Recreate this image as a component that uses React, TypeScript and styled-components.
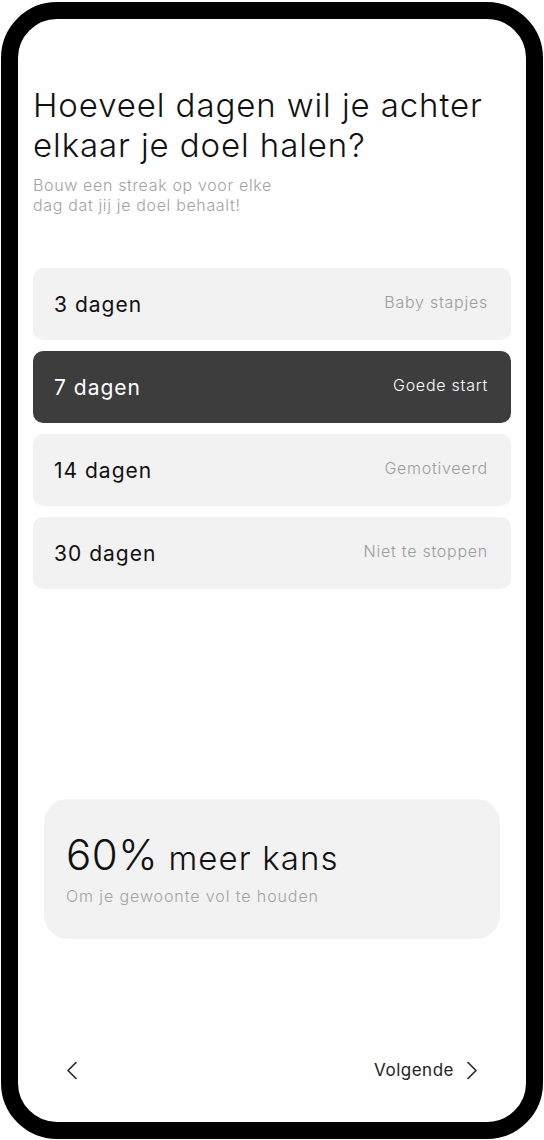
import React, {useState} from 'react'
import styled, {createGlobalStyle} from 'styled-components'

const GlobalStyle = createGlobalStyle`
  html, body {
    margin: 0;
    padding: 0;
    background: #ffffff;
  }
  body {
    font-family: Inter, "Noto Sans", sans-serif;
    -webkit-font-smoothing: antialiased;
  }
`

type Option = {
  days: number
  label: string
}

const options: Option[] = [
  {days: 3, label: 'Baby stapjes'},
  {days: 7, label: 'Goede start'},
  {days: 14, label: 'Gemotiveerd'},
  {days: 30, label: 'Niet te stoppen'},
]

const ChevronLeft: React.FC = () => (
  <svg width="12" height="19" viewBox="0 0 12 19" fill="none">
    <path d="M10 1.5L2 9.5L10 17.5" stroke="#222" strokeWidth="1.6" strokeLinecap="round" strokeLinejoin="round" />
  </svg>
)

const ChevronRight: React.FC = () => (
  <svg width="12" height="19" viewBox="0 0 12 19" fill="none">
    <path d="M2 1.5L10 9.5L2 17.5" stroke="#222" strokeWidth="1.6" strokeLinecap="round" strokeLinejoin="round" />
  </svg>
)

const App: React.FC = () => {
  const [selected, setSelected] = useState(7)

  return (
    <>
      <GlobalStyle />
      <StyledPhone>
        <StyledScreen>
          <StyledTitle>Hoeveel dagen wil je achter elkaar je doel halen?</StyledTitle>
          <StyledSubtitle>
            Bouw een streak op voor elke
            <br />
            dag dat jij je doel behaalt!
          </StyledSubtitle>

          <StyledOptionList>
            {options.map((option) => (
              <StyledOption
                key={option.days}
                $active={selected === option.days}
                onClick={() => setSelected(option.days)}
              >
                <StyledDays>{option.days} dagen</StyledDays>
                <StyledLabel>{option.label}</StyledLabel>
              </StyledOption>
            ))}
          </StyledOptionList>

          <StyledStatCard>
            <StyledStatHeading>
              <StyledPercent>60%</StyledPercent> meer kans
            </StyledStatHeading>
            <StyledStatText>Om je gewoonte vol te houden</StyledStatText>
          </StyledStatCard>

          <StyledFooter>
            <StyledNavButton aria-label="Terug">
              <ChevronLeft />
            </StyledNavButton>
            <StyledNavButton>
              Volgende
              <ChevronRight />
            </StyledNavButton>
          </StyledFooter>
        </StyledScreen>
      </StyledPhone>
    </>
  )
}

const StyledPhone = styled.div`
  box-sizing: border-box;
  width: 542px;
  height: 1137px;
  margin: 2px 1px 1px 1px;
  border: 17px solid #000;
  border-radius: 56px;
  background: #fff;
  overflow: hidden;
`

const StyledScreen = styled.div`
  display: flex;
  flex-direction: column;
  height: 100%;
  padding: 66px 15px 0;
  box-sizing: border-box;
`

const StyledTitle = styled.h1`
  margin: 0;
  font-size: 33px;
  font-weight: 300;
  line-height: 40px;
  color: #111;
  letter-spacing: 0.9px;
`

const StyledSubtitle = styled.p`
  margin: 10px 0 0;
  font-size: 16px;
  font-weight: 300;
  line-height: 20px;
  color: #a3a3a3;
  letter-spacing: 0.65px;
`

const StyledOptionList = styled.div`
  display: flex;
  flex-direction: column;
  gap: 11px;
  margin-top: 53px;
`

const StyledOption = styled.div<{$active: boolean}>`
  display: flex;
  align-items: center;
  justify-content: space-between;
  height: 72px;
  padding: 0 23px 0 21px;
  box-sizing: border-box;
  border-radius: 10px;
  background: ${(props) => (props.$active ? '#3d3d3d' : '#f2f2f2')};
  color: ${(props) => (props.$active ? '#ffffff' : '#111111')};
  cursor: pointer;

  & > span:last-child {
    color: ${(props) => (props.$active ? '#ffffff' : '#9c9c9c')};
  }
`

const StyledDays = styled.span`
  font-size: 21px;
  font-weight: 400;
  letter-spacing: 1px;
`

const StyledLabel = styled.span`
  font-size: 16px;
  font-weight: 300;
  margin-top: -4px;
  letter-spacing: 0.75px;
`

const StyledStatCard = styled.div`
  display: flex;
  flex-direction: column;
  margin: 210px 11px 0;
  height: 140px;
  padding: 30px 22px 0;
  box-sizing: border-box;
  border-radius: 24px;
  background: #f2f2f2;
`

const StyledStatHeading = styled.div`
  font-size: 33px;
  font-weight: 300;
  line-height: 52px;
  color: #111;
  letter-spacing: 1.1px;
`

const StyledPercent = styled.span`
  font-size: 42px;
  letter-spacing: 0.5px;
`

const StyledStatText = styled.div`
  margin-top: 2px;
  font-size: 16px;
  font-weight: 300;
  color: #a3a3a3;
  letter-spacing: 0.9px;
`

const StyledFooter = styled.div`
  display: flex;
  align-items: center;
  justify-content: space-between;
  height: 40px;
  margin-top: 111px;
  padding: 0 33px;
`

const StyledNavButton = styled.button`
  display: flex;
  align-items: center;
  gap: 12px;
  padding: 0;
  border: none;
  background: none;
  font-family: inherit;
  font-size: 17px;
  font-weight: 400;
  color: #222;
  letter-spacing: 0.5px;
  cursor: pointer;
`

export default App
